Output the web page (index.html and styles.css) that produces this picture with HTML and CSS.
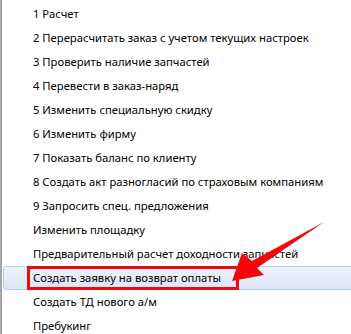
FILE: index.html
```html
<!DOCTYPE html>
<html lang="ru">
<head>
<meta charset="utf-8">
<link rel="stylesheet" href="styles.css">
</head>
<body>
<div class="page">
  <ul class="menu">
    <li class="item">1 Расчет</li>
    <li class="item">2 Перерасчитать заказ с учетом текущих настроек</li>
    <li class="item">3 Проверить наличие запчастей</li>
    <li class="item">4 Перевести в заказ-наряд</li>
    <li class="item">5 Изменить специальную скидку</li>
    <li class="item">6 Изменить фирму</li>
    <li class="item">7 Показать баланс по клиенту</li>
    <li class="item">8 Создать акт разногласий по страховым компаниям</li>
    <li class="item">9 Запросить спец. предложения</li>
    <li class="item">Изменить площадку</li>
    <li class="item">Предварительный расчет доходности запчастей</li>
    <li class="item active">Создать заявку на возврат оплаты<span class="mark"></span></li>
    <li class="item">Создать ТД нового а/м</li>
    <li class="item">Пребукинг</li>
  </ul>
  <svg class="arrow" width="351" height="334" viewBox="0 0 351 334" aria-hidden="true">
    <polygon points="232,281 242,253 252,261 324,222 257,268 264,275" fill="#f2070d"/>
  </svg>
</div>
</body>
</html>
```
FILE: styles.css
```css
html, body {
  margin: 0;
  padding: 0;
  background: #ffffff;
  overflow: hidden;
}
.page {
  position: relative;
  width: 351px;
  height: 334px;
  overflow: hidden;
}
.menu {
  list-style: none;
  margin: 0;
  padding: 2px 0 0 1px;
  width: 370px;
  border-left: 2px solid #a5a5a5;
  font-family: "Noto Sans", "Open Sans", sans-serif;
  font-size: 11.25px;
  color: #000000;
}
.item {
  position: relative;
  height: 24px;
  line-height: 24px;
  padding-left: 30px;
  box-sizing: border-box;
  white-space: nowrap;
}
.item.active {
  padding-left: 29px;
  border: 1px solid #b9cbe9;
  border-radius: 3px;
  line-height: 22px;
  background: linear-gradient(#eef2fb, #dde5f5);
}
.mark {
  position: absolute;
  left: 23px;
  top: -1px;
  width: 212px;
  height: 24px;
  box-sizing: border-box;
  border: 3px solid #f2070d;
}
.arrow {
  position: absolute;
  left: 0;
  top: 0;
}
```
